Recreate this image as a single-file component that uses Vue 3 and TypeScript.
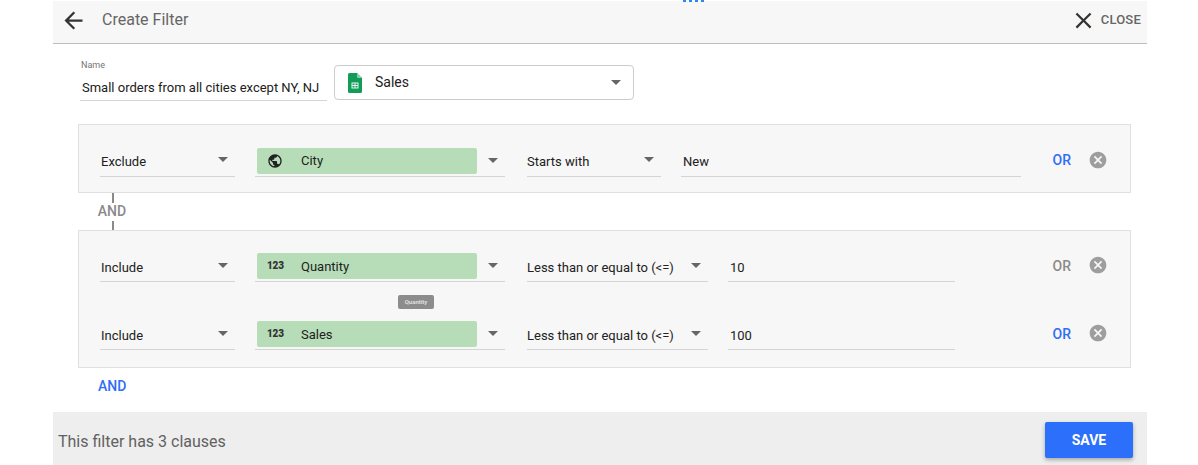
<script setup lang="ts">
interface Clause {
  mode: string;
  field: string;
  fieldType: 'geo' | 'num';
  op: string;
  opWidth: number;
  value: string;
  valueWidth: number;
  orActive: boolean;
}

const groups: Clause[][] = [
  [
    { mode: 'Exclude', field: 'City', fieldType: 'geo', op: 'Starts with', opWidth: 134, value: 'New', valueWidth: 340, orActive: true },
  ],
  [
    { mode: 'Include', field: 'Quantity', fieldType: 'num', op: 'Less than or equal to (<=)', opWidth: 181, value: '10', valueWidth: 227, orActive: false },
    { mode: 'Include', field: 'Sales', fieldType: 'num', op: 'Less than or equal to (<=)', opWidth: 181, value: '100', valueWidth: 227, orActive: true },
  ],
];
</script>

<template>
  <div class="page">
    <div class="dots"><i></i><i></i><i></i><i></i></div>
    <div class="panel">
      <header class="topbar">
        <svg class="back" viewBox="0 0 24 24"><path d="M20 11H7.83l5.59-5.59L12 4l-8 8 8 8 1.41-1.41L7.83 13H20v-2z" /></svg>
        <span class="title">Create Filter</span>
        <svg class="close-icon" viewBox="0 0 24 24"><path d="M19 6.41L17.59 5 12 10.59 6.41 5 5 6.41 10.59 12 5 17.59 6.41 19 12 13.41 17.59 19 19 17.59 13.41 12z" /></svg>
        <span class="close-label">CLOSE</span>
      </header>

      <div class="meta">
        <div class="name-field">
          <label>Name</label>
          <div class="name-value">Small orders from all cities except NY, NJ</div>
        </div>
        <div class="source">
          <svg class="sheet" viewBox="0 0 14 20">
            <path d="M1.5 0H9l5 5v13.5a1.5 1.5 0 0 1-1.5 1.5h-11A1.5 1.5 0 0 1 0 18.500v-17A1.500 1.500 0 0 1 1.500 0z" fill="#0f9d58" />
            <path d="M9 0l5 5H10a1 1 0 0 1-1-1z" fill="#87ceac" />
            <path d="M3.500 9.500h7v6h-7zM4.500 10.500v1.500h2v-1.500zM7.500 10.500v1.500h2v-1.500zM4.500 13v1.500h2V13zM7.500 13v1.500h2V13z" fill="#f1f1f1" fill-rule="evenodd" />
          </svg>
          <span class="source-name">Sales</span>
          <span class="caret source-caret"></span>
        </div>
      </div>

      <div class="clauses">
        <template v-for="(group, g) in groups" :key="g">
          <div class="joiner" v-if="g > 0">
            <span class="tick"></span>
            <span class="and">AND</span>
            <span class="tick"></span>
          </div>
          <section class="group">
            <div v-for="clause in group" :key="clause.field" class="row">
              <div class="select mode">
                <span class="select-text">{{ clause.mode }}</span>
                <span class="caret"></span>
              </div>
              <div class="field-select">
                <div class="pill">
                  <svg v-if="clause.fieldType === 'geo'" class="globe" viewBox="0 0 24 24"><path d="M12 2C6.480 2 2 6.480 2 12s4.480 10 10 10 10-4.480 10-10S17.520 2 12 2zm-1 17.930c-3.950-.490-7-3.850-7-7.930 0-.620.080-1.210.210-1.790L9 15v1c0 1.100.900 2 2 2v1.930zm6.900-2.540c-.260-.810-1-1.390-1.900-1.390h-1v-3c0-.550-.450-1-1-1H8v-2h2c.550 0 1-.450 1-1V7h2c1.100 0 2-.900 2-2v-.410c2.930 1.190 5 4.060 5 7.410 0 2.080-.800 3.970-2.100 5.390z" /></svg>
                  <span v-else class="num-icon">123</span>
                  <span class="pill-text">{{ clause.field }}</span>
                </div>
                <span class="caret"></span>
                <span v-if="clause.field === 'Quantity'" class="tooltip">Quantity</span>
              </div>
              <div class="select op" :style="{ width: clause.opWidth + 'px' }">
                <span class="select-text">{{ clause.op }}</span>
                <span class="caret"></span>
              </div>
              <div class="value" :style="{ width: clause.valueWidth + 'px' }">{{ clause.value }}</div>
              <div class="actions">
                <span class="or" :class="{ active: clause.orActive }">OR</span>
                <svg class="remove" viewBox="0 0 24 24"><path d="M12 2C6.470 2 2 6.470 2 12s4.470 10 10 10 10-4.470 10-10S17.530 2 12 2zm5 13.590L15.590 17 12 13.410 8.410 17 7 15.590 10.590 12 7 8.410 8.410 7 12 10.590 15.590 7 17 8.410 13.410 12 17 15.590z" /></svg>
              </div>
            </div>
          </section>
        </template>
        <div class="add-and">AND</div>
      </div>

      <footer class="footer">
        <span class="summary">This filter has 3 clauses</span>
        <button class="save">SAVE</button>
      </footer>
    </div>
  </div>
</template>

<style scoped>
.page {
  position: relative;
  width: 1198px;
  height: 465px;
  background: #fff;
  font-family: Roboto, "Liberation Sans", sans-serif;
  color: #212121;
  overflow: hidden;
}

.dots {
  position: absolute;
  top: 0;
  left: 683px;
  display: flex;
  gap: 3px;
}

.dots i {
  width: 3px;
  height: 2px;
  background: #2f86ea;
}

.panel {
  width: 1094px;
  margin-left: 53px;
}

.topbar {
  display: flex;
  align-items: center;
  height: 38px;
  margin-top: 1px;
  padding: 0 6px 4px 7px;
  background: #f7f7f7;
  border-bottom: 1px solid #bdbdbd;
}

.back {
  width: 27px;
  height: 27px;
  fill: #333;
}

.title {
  margin: 0 0 2px 15px;
  font-size: 16px;
  color: #666;
}

.close-icon {
  width: 27px;
  height: 27px;
  margin-left: auto;
  fill: #333;
}

.close-label {
  margin: 0 0 2px 4px;
  font-size: 13px;
  font-weight: 500;
  letter-spacing: 0.2px;
  color: #666;
}

.meta {
  display: flex;
  align-items: flex-start;
  gap: 7px;
  padding: 16px 0 0 27px;
}

.name-field {
  width: 247px;
  height: 40px;
  border-bottom: 1px solid #d4d4d4;
}

.name-field label {
  display: block;
  padding-left: 1px;
  font-size: 9px;
  line-height: 11px;
  color: #757575;
}

.name-value {
  margin-top: 8px;
  padding-left: 2px;
  font-size: 13px;
  line-height: 18px;
  white-space: nowrap;
}

.source {
  display: flex;
  align-items: center;
  width: 300px;
  height: 35px;
  margin-top: 5px;
  box-sizing: border-box;
  border: 1px solid #ccc;
  border-radius: 4px;
  padding: 0 12px 0 13px;
}

.sheet {
  width: 14px;
  height: 20px;
}

.source-name {
  margin: 0 0 2px 13px;
  font-size: 14px;
}

.source-caret {
  margin-left: auto;
  border-width: 5px 5.500px 0;
  border-top-color: #333;
}

.caret {
  display: block;
  flex: none;
  width: 0;
  height: 0;
  border-style: solid;
  border-width: 5px 5px 0;
  border-color: #666 transparent transparent;
}

.clauses {
  padding: 23px 16px 0 25px;
}

.group {
  display: flex;
  flex-direction: column;
  gap: 39px;
  padding: 23px 22px 15px 21px;
  background: #f7f7f7;
  border: 1px solid #e0e0e0;
}

.joiner + .group {
  padding-top: 22px;
  padding-bottom: 17px;
}

.row {
  display: flex;
  height: 29px;
}

.select {
  display: flex;
  align-items: center;
  justify-content: space-between;
  box-sizing: border-box;
  height: 29px;
  padding: 0 7px 2px 1px;
  border-bottom: 1px solid #d4d4d4;
}

.joiner + .group .select {
  padding-bottom: 0;
}

.mode {
  width: 135px;
}

.select-text {
  font-size: 13px;
  white-space: nowrap;
}

.select .caret {
  margin-top: -3px;
}

.field-select {
  position: relative;
  display: flex;
  align-items: center;
  box-sizing: border-box;
  width: 250px;
  height: 29px;
  margin-left: 20px;
  padding-left: 2px;
  padding-bottom: 3px;
  border-bottom: 1px solid #d4d4d4;
}

.pill {
  display: flex;
  align-items: center;
  width: 220px;
  height: 26px;
  background: #b7ddb8;
  border-radius: 2px;
}

.field-select .caret {
  margin-left: 11px;
}

.globe {
  width: 16px;
  height: 16px;
  margin-left: 10px;
  fill: #212121;
}

.num-icon {
  width: 16px;
  margin-left: 10px;
  font-size: 10px;
  font-weight: 900;
  letter-spacing: -0.2px;
  color: #333;
}

.pill-text {
  margin-left: 18px;
  font-size: 13px;
}

.joiner + .group .pill-text {
  padding-top: 2px;
}

.tooltip {
  position: absolute;
  top: 42px;
  left: 143px;
  width: 36px;
  height: 14px;
  background: #8c8c8c;
  border-radius: 2px;
  color: #e8e8e8;
  font-size: 6px;
  font-weight: 500;
  line-height: 14px;
  text-align: center;
}

.op {
  margin-left: 22px;
  padding-left: 0;
}

.value {
  box-sizing: border-box;
  height: 29px;
  margin-left: 20px;
  padding: 6px 0 0 2px;
  font-size: 13px;
  line-height: 16px;
  border-bottom: 1px solid #d4d4d4;
}

.joiner + .group .value {
  padding-top: 7px;
}

.actions {
  display: flex;
  align-items: flex-start;
  margin-left: auto;
  padding-top: 3px;
}

.or {
  margin-top: 1px;
  font-size: 14px;
  font-weight: 500;
  line-height: 16px;
  color: #8a8a8a;
}

.joiner + .group .or {
  margin-top: 2px;
}

.or.active {
  color: #2f6ef6;
}

.remove {
  width: 20px;
  height: 20px;
  margin: -1px 0 0 17px;
  fill: #9e9e9e;
}

.joiner {
  display: flex;
  flex-direction: column;
  align-items: center;
  width: 28px;
  height: 37px;
  margin-left: 21px;
  justify-content: space-between;
  color: #8a8a8a;
}

.tick {
  width: 2px;
  height: 10px;
  background: #8a8a8a;
}

.and {
  margin: 0 2px 2px 0;
  font-size: 14px;
  font-weight: 500;
  line-height: 16px;
}

.add-and {
  width: 28px;
  margin: 10px 0 0 20px;
  font-size: 14px;
  font-weight: 500;
  line-height: 16px;
  text-align: center;
  color: #2f6ef6;
}

.footer {
  display: flex;
  align-items: center;
  justify-content: space-between;
  height: 56px;
  margin-top: 18px;
  padding: 0 14px 0 5px;
  background: #eee;
}

.summary {
  padding-top: 2px;
  font-size: 16px;
  color: #616161;
}

.save {
  width: 88px;
  height: 36px;
  border: none;
  border-radius: 2px;
  background: #2b6ffb;
  box-shadow: 0 2px 4px rgba(0, 0, 0, 0.3);
  color: #fff;
  font-family: inherit;
  font-size: 14px;
  font-weight: 700;
}
</style>
